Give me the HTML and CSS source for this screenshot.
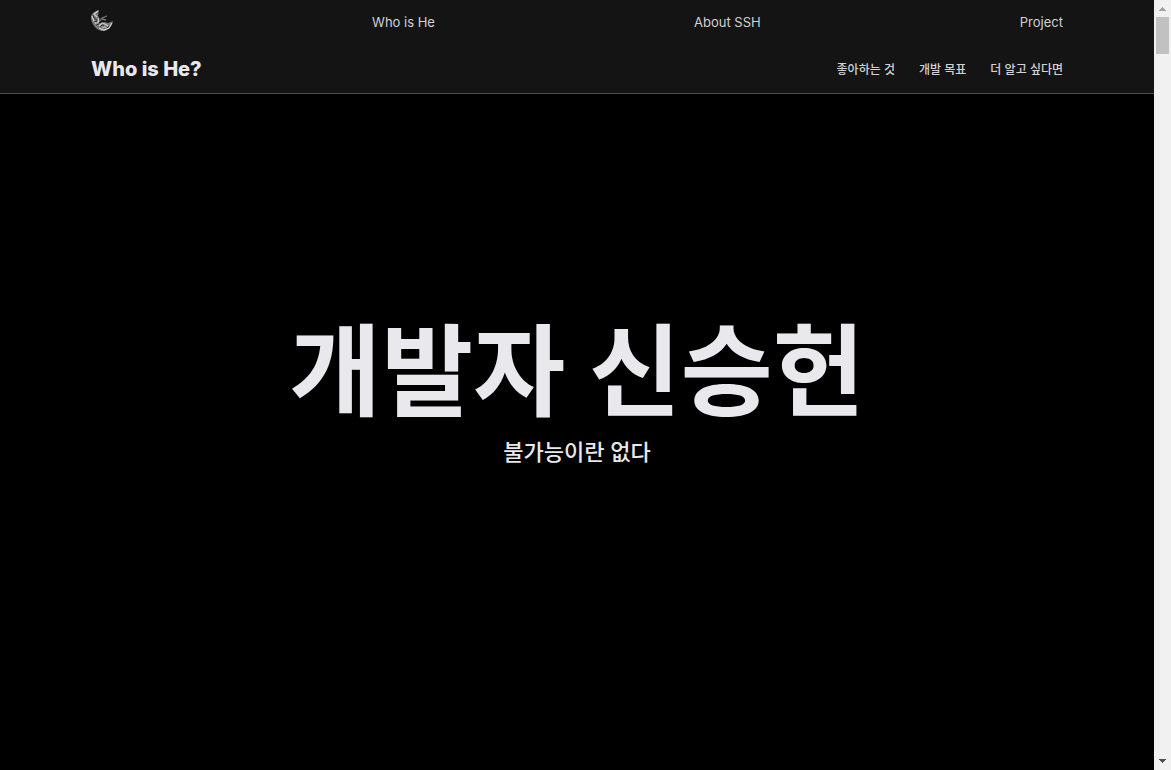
FILE: index.html
```html
<!DOCTYPE html>
<html lang="ko">
<head>
<meta charset="utf-8">
<meta name="viewport" content="width=device-width, initial-scale=1">
<title>Who is He?</title>
<link rel="stylesheet" href="styles.css">
</head>
<body>
<div class="page">
  <header class="header">
    <nav class="global-nav" aria-label="Global">
      <a class="logo" href="#" aria-label="Home">
        <svg viewBox="0 0 22 22" width="22" height="22" aria-hidden="true">
          <path fill="#777" d="M8 0C4 1 1 3 0 6c-.5 5 2 10 6 13 3 2 7 3 10 1 3-2 5-5 6-9l-5 2-4-1-3 2-2-1 1-4-2-3Z"/>
          <path fill="none" stroke="#d0d0d0" stroke-width="1.2" d="M7 1 3 4l3 3M1 6l2 5 3 4M7 8l1 3-2 2m2 3 3-3 3 1 3 2M8 18l5 2 5-2 3-5M11 17h4"/>
          <path fill="none" stroke="#303030" d="m2 5 1 3 3 2M3 12l3-1m-1 4 3-1m1 3 2-2 2 1m3 2 2-2m-9-8v3"/>
          <path fill="none" stroke="#777" stroke-width="1.3" d="m9 11 2-3 5-2M11 9l4 1"/>
        </svg>
      </a>
      <a href="#">Who is He</a>
      <a href="#">About SSH</a>
      <a href="#">Project</a>
    </nav>
    <nav class="local-nav" aria-label="Who is He?">
      <a class="local-title" href="#">Who is He?</a>
      <div class="local-links">
        <a href="#">좋아하는 것</a>
        <a href="#">개발 목표</a>
        <a href="#">더 알고 싶다면</a>
      </div>
    </nav>
  </header>
  <main class="hero">
    <h1>개발자 신승헌</h1>
    <p>불가능이란 없다</p>
  </main>
</div>
<div class="scrollbar" aria-hidden="true">
  <svg viewBox="0 0 17 17" width="17" height="17" shape-rendering="crispEdges"><path fill="#a3a3a3" d="M8 7h1v1h1v1h1v1h1v1H5v-1h1V9h1V8h1Z"/></svg>
  <div class="thumb"></div>
  <svg class="down" viewBox="0 0 17 17" width="17" height="17" shape-rendering="crispEdges"><path fill="#505050" d="M5 6h7v1h-1v1h-1v1H9v1H8V9H7V8H6V7H5Z"/></svg>
</div>
</body>
</html>
```
FILE: styles.css
```css
* { box-sizing: border-box; }
body {
  margin: 0;
  display: flex;
  min-height: 100vh;
  background: #000;
  color: #e8e8ed;
  font-family: Inter, "Noto Sans CJK KR", sans-serif;
}
a { color: inherit; text-decoration: none; }
.page { flex: 1; display: flex; flex-direction: column; }
.header {
  background: #141414;
  border-bottom: 1px solid #505050;
}
.global-nav, .local-nav {
  display: flex;
  align-items: center;
  justify-content: space-between;
  max-width: 1016px;
  margin: 0 auto;
  padding: 0 22px;
}
.global-nav { height: 44px; font-size: 13px; color: #d2d2d6; }
.logo { display: flex; padding-bottom: 2px; }
.local-nav { height: 49px; }
.local-title { font-size: 20px; font-weight: 800; }
.local-links {
  display: flex;
  gap: 24px;
  font-size: 12px;
  font-weight: 500;
  color: #d2d2d6;
}
.hero {
  flex: 1;
  display: flex;
  flex-direction: column;
  align-items: center;
  padding-top: 214px;
  text-align: center;
}
.hero h1 { margin: 0; font-size: 100px; line-height: 128px; font-weight: 700; }
.hero p { margin: 0; font-size: 22px; line-height: 32px; font-weight: 500; }
.scrollbar {
  width: 17px;
  display: flex;
  flex-direction: column;
  align-items: center;
  background: #f1f1f1;
}
.thumb { width: 13px; height: 37px; background: #c1c1c1; }
.down { margin-top: auto; }
```
